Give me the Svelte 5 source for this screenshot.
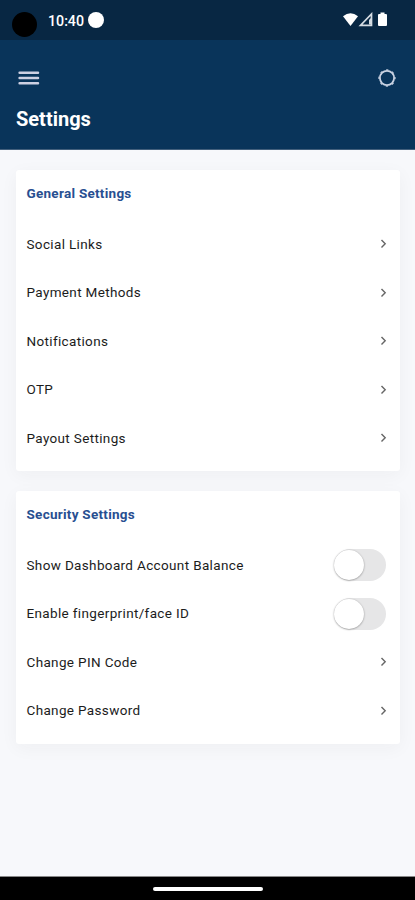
<script lang="ts">
  type Row = { label: string; toggle?: boolean };

  const sections: { title: string; rows: Row[] }[] = [
    {
      title: 'General Settings',
      rows: [
        { label: 'Social Links' },
        { label: 'Payment Methods' },
        { label: 'Notifications' },
        { label: 'OTP' },
        { label: 'Payout Settings' }
      ]
    },
    {
      title: 'Security Settings',
      rows: [
        { label: 'Show Dashboard Account Balance', toggle: true },
        { label: 'Enable fingerprint/face ID', toggle: true },
        { label: 'Change PIN Code' },
        { label: 'Change Password' }
      ]
    }
  ];

  let enabled: Record<string, boolean> = $state({});
</script>

<div class="screen">
  <div class="status">
    <span class="camera"></span>
    <span class="time">10:40</span>
    <span class="dot"></span>
    <svg class="indicators" width="46" height="16" viewBox="0 0 46 16" aria-hidden="true">
      <path d="M0 4.2 Q7.5 -1.6 15 4.2 L7.5 14 Z" fill="#fff" />
      <path d="M28.5 2 V13.3 H17.5 Z" fill="none" stroke="#d5dce3" stroke-width="1.7" />
      <path d="M28 6 V12.5 H26 V8 Z" fill="#d5dce3" />
      <path d="M36 2 H37.5 V.5 H41.5 V2 H43 Q44 2 44 3 V13 Q44 14 43 14 H36 Q35 14 35 13 V3 Q35 2 36 2 Z" fill="#fff" />
    </svg>
  </div>

  <header>
    <div class="bar">
      <button aria-label="Menu">
        <svg width="22" height="16" viewBox="0 0 22 16">
          <path d="M1.6 2.8 H20 M1.6 8.1 H20 M1.6 13.3 H20" stroke="#cdd0e2" stroke-width="2.5" stroke-linecap="round" />
        </svg>
      </button>
      <button aria-label="Theme">
        <svg width="18" height="18" viewBox="0 0 18 18">
          <circle cx="9" cy="9" r="7.1" fill="none" stroke="#c9d2e2" stroke-width="1.8" />
          <circle cx="9" cy="9" r="8.1" fill="none" stroke="#c9d2e2" stroke-width="1.1" stroke-dasharray="2.4 3.962" stroke-dashoffset="1.2" />
        </svg>
      </button>
    </div>
    <h1>Settings</h1>
  </header>

  <main>
    {#each sections as section (section.title)}
      <section>
        <h2>{section.title}</h2>
        {#each section.rows as row (row.label)}
          <div class="row">
            <span class="label">{row.label}</span>
            {#if row.toggle}
              <button
                class="switch"
                class:on={enabled[row.label]}
                role="switch"
                aria-checked={!!enabled[row.label]}
                aria-label={row.label}
                onclick={() => (enabled[row.label] = !enabled[row.label])}
              >
                <span class="knob"></span>
              </button>
            {:else}
              <svg class="chevron" width="7" height="10" viewBox="0 0 7 10" aria-hidden="true">
                <path d="M1.5 1 L5.2 4.8 L1.5 8.6" fill="none" stroke="#666" stroke-width="1.4" />
              </svg>
            {/if}
          </div>
        {/each}
      </section>
    {/each}
  </main>

  <footer><span></span></footer>
</div>

<style>
  :global(body) {
    background: #f7f8fb;
  }

  .screen {
    display: flex;
    flex-direction: column;
    height: 900px;
    font-family: Roboto, 'Liberation Sans', sans-serif;
    background: #f7f8fb;
  }

  .status {
    display: flex;
    align-items: center;
    box-sizing: border-box;
    height: 40px;
    padding: 0 26px 0 12px;
    background: #082743;
    color: #fff;
  }

  .camera {
    width: 25px;
    height: 25px;
    margin-top: 9px;
    border-radius: 50%;
    background: #000;
  }

  .time {
    width: 36px;
    margin: 2px 4px 0 11px;
    font-size: 14.2px;
    font-weight: 500;
    line-height: 20px;
  }

  .dot {
    width: 16px;
    height: 16px;
    border-radius: 50%;
    background: #fff;
  }

  .indicators {
    margin-left: auto;
  }

  header {
    box-sizing: border-box;
    height: 110px;
    padding: 28px 19px 0 16px;
    background: #09345a;
    border-bottom: 1px solid #425f7c;
    color: #fff;
  }

  .bar {
    display: flex;
    align-items: center;
    justify-content: space-between;
    height: 20px;
    padding-left: 2px;
  }

  button {
    padding: 0;
    border: 0;
    background: none;
  }

  button svg {
    display: block;
  }

  h1 {
    margin: 18px 0 0;
    font-size: 20px;
    font-weight: 700;
    line-height: 26px;
  }

  main {
    display: flex;
    flex: 1;
    flex-direction: column;
    gap: 20px;
    padding: 20px 15px 0 16px;
  }

  section {
    padding: 0 14px 8.75px 10.5px;
    border-radius: 3px;
    background: #fff;
    box-shadow: 0 4px 18px rgba(40, 40, 50, 0.045);
  }

  h2 {
    margin: 0;
    height: 49.75px;
    color: #284f91;
    font-size: 13.5px;
    font-weight: 700;
    line-height: 46px;
    letter-spacing: 0.27px;
  }

  .row {
    display: flex;
    align-items: center;
    justify-content: space-between;
    height: 48.5px;
    color: #1c1c1c;
    font-size: 13.5px;
    font-weight: 400;
    letter-spacing: 0.35px;
  }

  .label {
    padding-bottom: 1px;
  }

  .chevron {
    margin-right: -1px;
  }

  .switch {
    width: 52px;
    height: 32px;
    border-radius: 16px;
    background: #e6e6e7;
  }

  .switch.on {
    background: #284f91;
  }

  .knob {
    display: block;
    width: 30px;
    height: 30px;
    border-radius: 50%;
    background: #fff;
    box-shadow: 0 0.5px 2px rgba(0, 0, 0, 0.4);
    transition: transform 150ms;
  }

  .switch.on .knob {
    transform: translateX(22px);
  }

  footer {
    display: flex;
    align-items: center;
    justify-content: center;
    box-sizing: border-box;
    height: 24px;
    border-top: 1px solid #888;
    background: #000;
  }

  footer span {
    width: 110px;
    height: 4px;
    border-radius: 2px;
    background: #fff;
  }
</style>
